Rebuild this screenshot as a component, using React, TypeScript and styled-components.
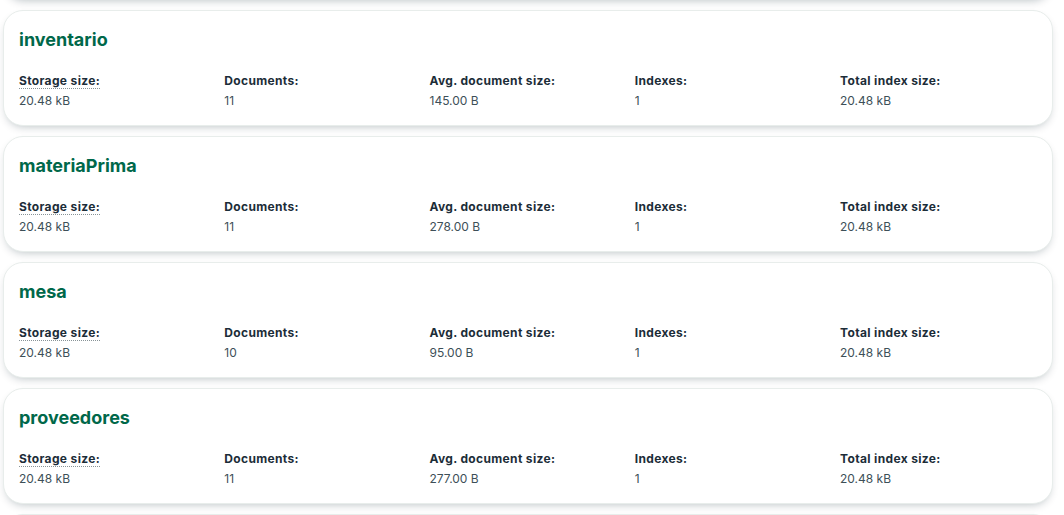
import React from "react";
import styled, { createGlobalStyle } from "styled-components";

const Global = createGlobalStyle`
  html, body { margin: 0; padding: 0; background: #ffffff; }
  body { font-family: Inter, "Open Sans", Arial, sans-serif; overflow: hidden; }
`;

const List = styled.div`
  display: flex;
  flex-direction: column;
  gap: 10px;
  margin-top: -116px;
  padding: 0 11px 0 3px;
`;

const Card = styled.div`
  box-sizing: border-box;
  height: 116px;
  padding: 17px 16px 15px 15px;
  background: #ffffff;
  border: 1px solid #e8edeb;
  border-radius: 20px;
  box-shadow: 0 4px 10px -4px rgba(0, 30, 43, 0.3);
`;

const Title = styled.h2`
  margin: 0;
  height: 24px;
  font-size: 18px;
  line-height: 24px;
  font-weight: 700;
  color: #00684a;
`;

const Stats = styled.div`
  display: grid;
  grid-template-columns: repeat(5, 205.25px);
  margin-top: 20px;
`;

const Stat = styled.div`
  display: flex;
  flex-direction: column;
  gap: 2px;
`;

const Label = styled.span<{ $dotted?: boolean }>`
  font-size: 12px;
  line-height: 18px;
  font-weight: 700;
  letter-spacing: 0.35px;
  color: #1c2d38;
  align-self: flex-start;
  text-decoration: ${(p) => (p.$dotted ? "underline dotted #889397" : "none")};
  text-decoration-thickness: 1px;
  text-underline-offset: 3px;
`;

const Value = styled.span`
  font-size: 12px;
  line-height: 18px;
  color: #3d4f58;
`;

type Coll = { name: string; docs: string; avg: string };

const collections: Coll[] = [
  { name: "estadisticas", docs: "11", avg: "145.00 B" },
  { name: "inventario", docs: "11", avg: "145.00 B" },
  { name: "materiaPrima", docs: "11", avg: "278.00 B" },
  { name: "mesa", docs: "10", avg: "95.00 B" },
  { name: "proveedores", docs: "11", avg: "277.00 B" },
  { name: "usuarios", docs: "11", avg: "200.00 B" },
];

export default function App() {
  return (
    <>
      <Global />
      <List>
        {collections.map((c) => (
          <Card key={c.name}>
            <Title>{c.name}</Title>
            <Stats>
              <Stat>
                <Label $dotted>Storage size:</Label>
                <Value>20.48 kB</Value>
              </Stat>
              <Stat>
                <Label>Documents:</Label>
                <Value>{c.docs}</Value>
              </Stat>
              <Stat>
                <Label>Avg. document size:</Label>
                <Value>{c.avg}</Value>
              </Stat>
              <Stat>
                <Label>Indexes:</Label>
                <Value>1</Value>
              </Stat>
              <Stat>
                <Label>Total index size:</Label>
                <Value>20.48 kB</Value>
              </Stat>
            </Stats>
          </Card>
        ))}
      </List>
    </>
  );
}
